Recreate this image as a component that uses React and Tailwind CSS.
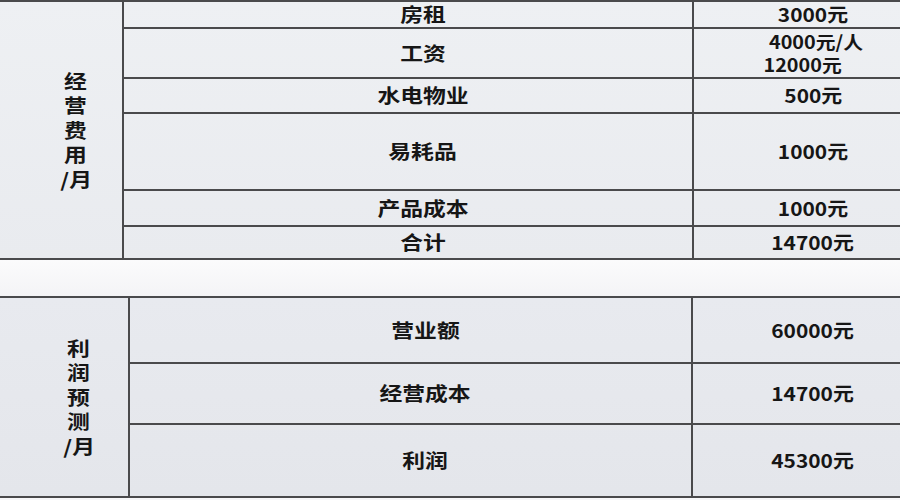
import React from "react";

const T = ({ children, className = "" }) => (
  <span className={"inline-block scale-x-[1.2] " + className}>{children}</span>
);

const N = ({ children, className = "" }) => (
  <span className={"inline-block scale-x-[1.1] " + className}>{children}</span>
);

function Row({ h, border = true, mid, right, midW }) {
  return (
    <div
      className={
        "flex " + (border ? "border-b-2 border-[#4a4a4c] " : "") + h
      }
    >
      <div
        className={
          "flex items-center justify-center border-r-2 border-[#4a4a4c] pl-[30px] " +
          midW
        }
      >
        <T>{mid}</T>
      </div>
      <div className="flex flex-1 items-center justify-center pl-[32px]">
        {right}
      </div>
    </div>
  );
}

function Vertical({ chars }) {
  return (
    <div className="flex flex-col items-center text-[19px] leading-[24.5px]">
      {chars.map((c, i) => (
        <T key={i}>{c}</T>
      ))}
    </div>
  );
}

export default function App() {
  return (
    <div className="flex h-[500px] w-[900px] flex-col overflow-hidden bg-[#f7f7f9] font-['Noto_Sans_CJK_SC',sans-serif] text-[19px] font-bold text-[#161616]">
      {/* Top table */}
      <div className="flex h-[260px] border-y-2 border-[#4a4a4c] bg-gradient-to-b from-[#eef0f3] to-[#e9ebef]">
        <div className="flex w-[124px] items-center justify-center border-r-2 border-[#4a4a4c] pl-[30px]">
          <Vertical chars={["经", "营", "费", "用", "/月"]} />
        </div>
        <div className="flex flex-1 flex-col">
          <Row h="h-[27px]" midW="w-[570px]" mid="房租" right={<N>3000元</N>} />
          <Row
            h="h-[50px]"
            midW="w-[570px]"
            mid="工资"
            right={
              <div className="flex scale-x-[1.1] flex-col items-start text-[18px] leading-[23px]">
                <span className="ml-[5px]">4000元/人</span>
                <span>12000元</span>
              </div>
            }
          />
          <Row h="h-[35px]" midW="w-[570px]" mid="水电物业" right={<N>500元</N>} />
          <Row h="h-[77px]" midW="w-[570px]" mid="易耗品" right={<N>1000元</N>} />
          <Row h="h-[36px]" midW="w-[570px]" mid="产品成本" right={<N>1000元</N>} />
          <Row
            h="h-[31px]"
            border={false}
            midW="w-[570px]"
            mid="合计"
            right={<N>14700元</N>}
          />
        </div>
      </div>

      {/* gap */}
      <div className="h-[36px] bg-gradient-to-b from-[#fbfbfc] to-[#f4f4f6]" />

      {/* Bottom table */}
      <div className="flex h-[202px] border-y-2 border-[#4a4a4c] bg-gradient-to-b from-[#e8eaef] to-[#e4e6eb]">
        <div className="flex w-[130px] items-center justify-center border-r-2 border-[#4a4a4c] pl-[30px]">
          <Vertical chars={["利", "润", "预", "测", "/月"]} />
        </div>
        <div className="flex flex-1 flex-col">
          <Row h="h-[66px]" midW="w-[563px]" mid="营业额" right={<N>60000元</N>} />
          <Row h="h-[61px]" midW="w-[563px]" mid="经营成本" right={<N>14700元</N>} />
          <Row
            h="h-[71px]"
            border={false}
            midW="w-[563px]"
            mid="利润"
            right={<N>45300元</N>}
          />
        </div>
      </div>
    </div>
  );
}
